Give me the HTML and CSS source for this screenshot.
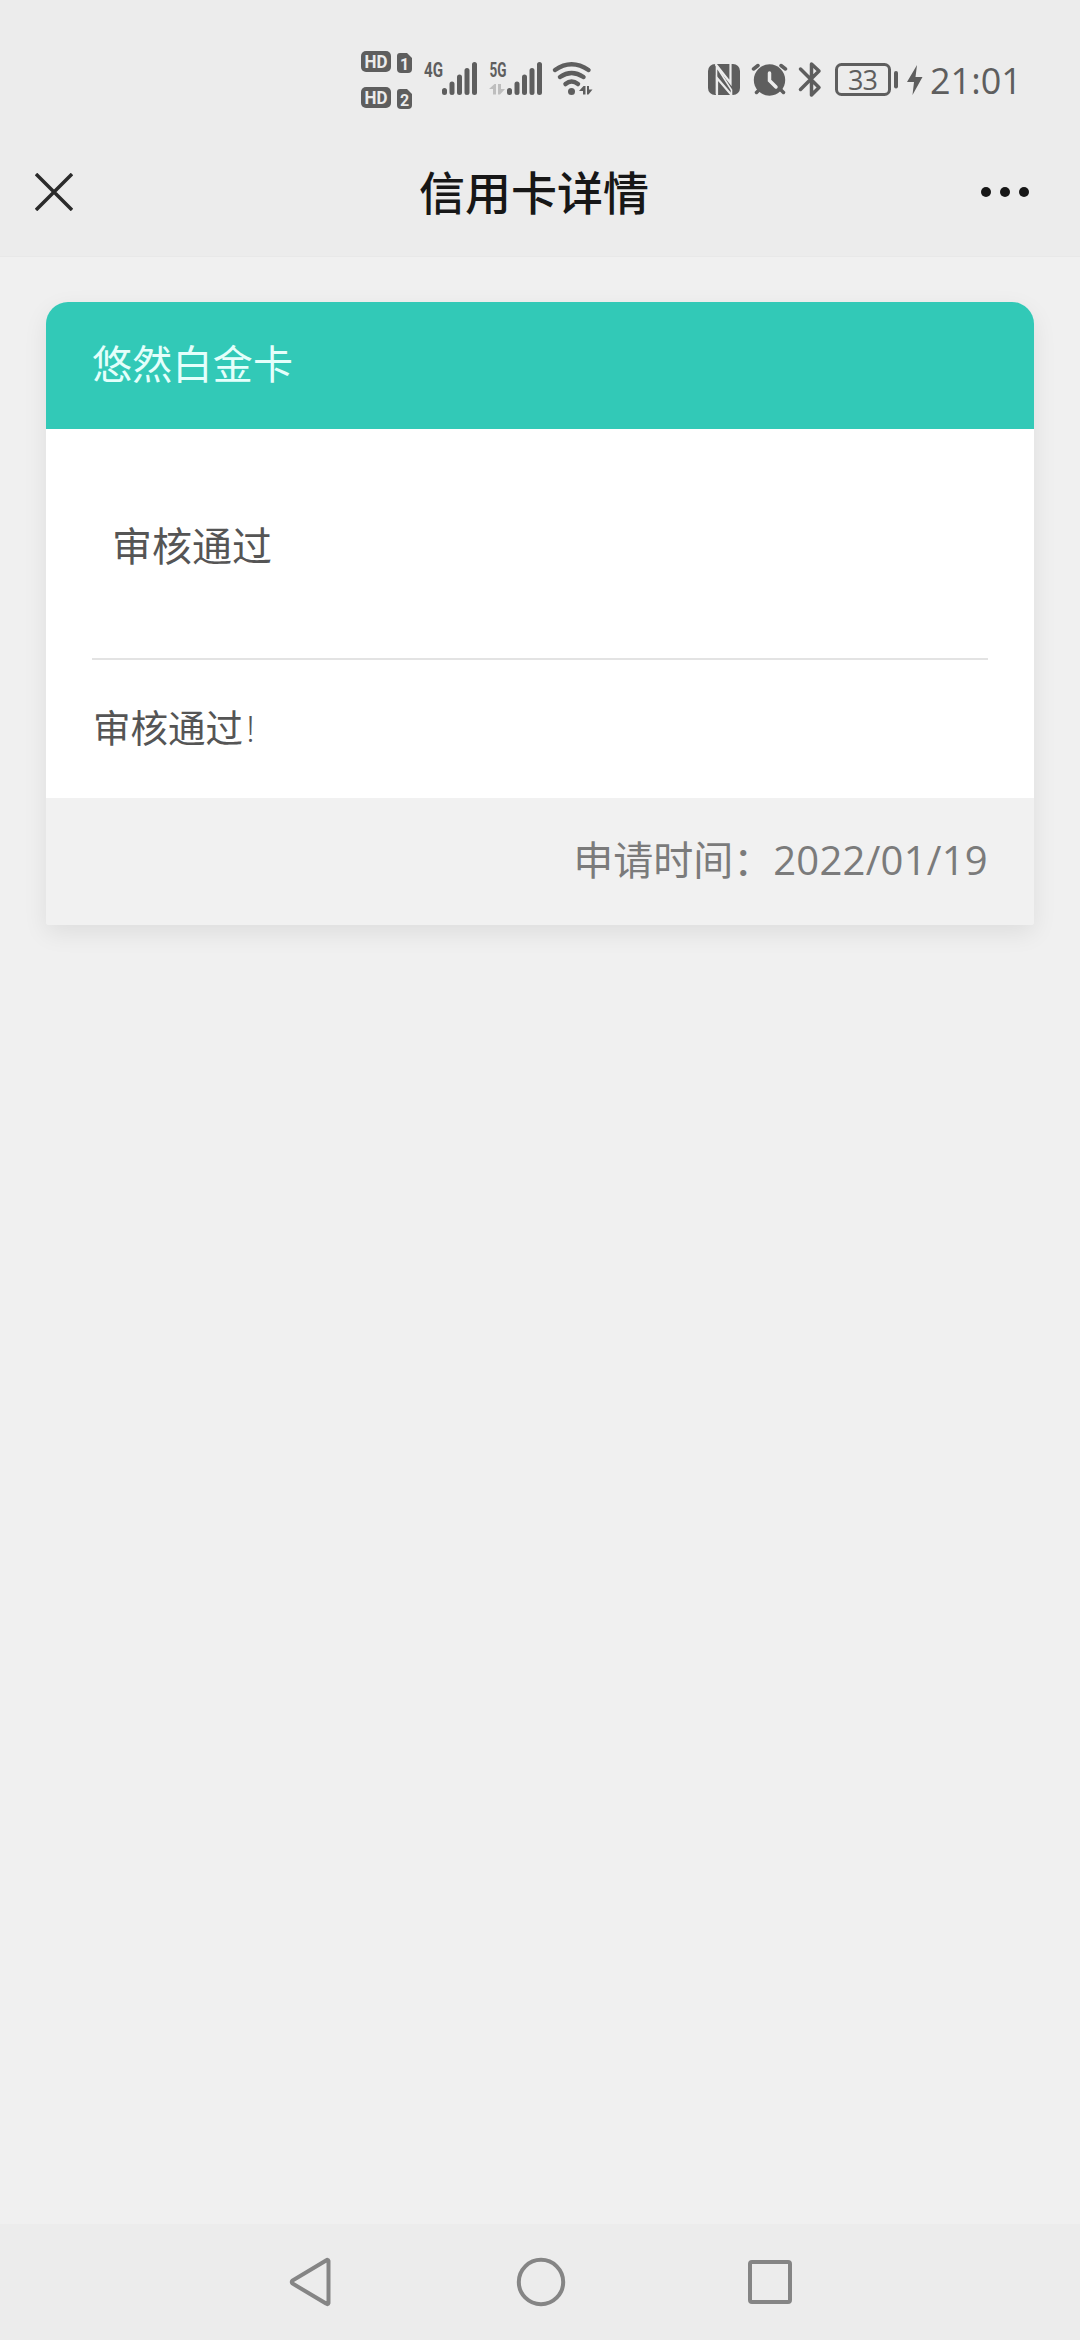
FILE: index.html
```html
<!DOCTYPE html>
<html lang="zh-CN">
<head>
<meta charset="utf-8">
<title>信用卡详情</title>
<link rel="stylesheet" href="styles.css">
</head>
<body>
<div class="screen">
  <header class="top">
    <div class="status">
      <svg class="status-left" viewBox="350 40 250 80" width="250" height="80">
        <g fill="#5e5e5e">
          <rect x="361" y="51" width="30" height="21" rx="5"/>
          <path d="M400 53H407L412 58V69Q412 73 408 73H401Q397 73 397 69V56Q397 53 400 53Z"/>
          <rect x="361" y="87" width="30" height="21" rx="5"/>
          <path d="M400 89H407L412 94V105Q412 109 408 109H401Q397 109 397 105V92Q397 89 400 89Z"/>
        </g>
        <g class="badge-text">
          <text x="364.5" y="68" textLength="23" lengthAdjust="spacingAndGlyphs">HD</text>
          <text x="364.5" y="104" textLength="23" lengthAdjust="spacingAndGlyphs">HD</text>
          <text class="sim" x="400" y="69.5">1</text>
          <text class="sim" x="400" y="105.5">2</text>
        </g>
        <g class="net-text">
          <text x="424" y="77" textLength="19" lengthAdjust="spacingAndGlyphs">4G</text>
          <text x="489.5" y="77" textLength="17" lengthAdjust="spacingAndGlyphs">5G</text>
        </g>
        <g stroke="#5e5e5e" stroke-width="5" stroke-linecap="round">
          <path d="M444.5 90.5V92.5M452 84V92.5M459.5 77V92.5M467 70.5V92.5M474.5 64.5V92.5"/>
          <path d="M509.5 90.5V92.5M517 84V92.5M524.5 77V92.5M532 70.5V92.5M539.5 64.5V92.5"/>
        </g>
        <path fill="#bebebe" d="M489 89L494.5 84H496V94.5H493V89ZM498 84H501V89H505L500 94.5H498Z"/>
        <g fill="none" stroke="#5e5e5e" stroke-width="4.5" stroke-linecap="round">
          <path d="M555 70Q571.5 58.5 588.5 70"/>
          <path d="M560 77Q571.5 69 583.5 77"/>
          <path d="M565.5 84Q571.5 79 578 84"/>
        </g>
        <circle cx="571.5" cy="91.5" r="3.5" fill="#5e5e5e"/>
        <path fill="#5e5e5e" d="M579 91L583.5 86H585.5V94.5H583V91ZM587 86H589V89.5H592.5L588.5 94.5H587Z"/>
      </svg>
      <svg class="status-right" viewBox="700 40 230 80" width="230" height="80">
        <rect x="708" y="64" width="32" height="31" rx="7" fill="#5e5e5e"/>
        <path d="M717 95V78L731.500 95M715.500 64L730.500 83V64" fill="none" stroke="#ececec" stroke-width="2.200"/>
        <path d="M716.500 94V66.500L731.500 90V95" fill="none" stroke="#ececec" stroke-width="1.600"/>
        <path stroke="#5e5e5e" stroke-linecap="round" stroke-width="3.500" d="M753.5 69L758 65.5M785.5 69L781 65.5M756.5 92.5L761 88M783.5 92.5L779 88"/>
        <circle cx="769.500" cy="80" r="15.700" fill="#5e5e5e"/>
        <path d="M769.5 73V80.5L776 87" fill="none" stroke="#ececec" stroke-width="3.500" stroke-linecap="round"/>
        <path d="M800.5 69L819 87.500L811.5 95V64L819 71L800.5 89.5" fill="none" stroke="#5e5e5e" stroke-width="3.500" stroke-linecap="round" stroke-linejoin="round"/>
        <rect x="836.500" y="64.500" width="53" height="30" rx="5" fill="none" stroke="#5e5e5e" stroke-width="3"/>
        <text class="battery-text" x="862.500" y="90" text-anchor="middle">33</text>
        <path d="M896 73V86.5" stroke="#5e5e5e" stroke-width="4" stroke-linecap="round"/>
        <path d="M917 65L907 82H914L912.5 95L922.5 77H915.5Z" fill="#5e5e5e"/>
      </svg>
      <span class="clock">21:01</span>
    </div>
    <div class="titlebar">
      <svg viewBox="0 0 38 38" width="38" height="38"><path d="M1 1L37 37M37 1L1 37" stroke="#2b2b2b" stroke-width="3.500"/></svg>
      <h1 class="title">信用卡详情</h1>
      <svg viewBox="0 0 50 12" width="50" height="12" fill="#171717"><circle cx="6" cy="6" r="5"/><circle cx="25" cy="6" r="5"/><circle cx="44" cy="6" r="5"/></svg>
    </div>
  </header>
  <main class="content">
    <section class="card">
      <div class="card-head">悠然白金卡</div>
      <div class="card-body">
        <div class="result">审核通过</div>
        <div class="message">审核通过<span class="mark">!</span></div>
      </div>
      <div class="card-foot">申请时间：<span class="date">2022/01/19</span></div>
    </section>
  </main>
  <nav class="navbar">
    <svg viewBox="0 0 50 50" width="50" height="50"><path d="M41.5 4V46Q41 48 39 46.500L5.500 26.500Q4 25 5.500 23.500L39 3.500Q41 2 41.5 4Z"/></svg>
    <svg viewBox="0 0 50 50" width="50" height="50"><circle cx="25" cy="25" r="22.200"/></svg>
    <svg viewBox="0 0 50 50" width="50" height="50"><rect x="5" y="5" width="40" height="40" rx="2"/></svg>
  </nav>
</div>
</body>
</html>
```
FILE: styles.css
```css
* { box-sizing: border-box; }
body {
  margin: 0;
  background: #f0f0f0;
  font-family: "Open Sans", "Noto Sans CJK SC", sans-serif;
}
svg { display: block; flex: none; }
.screen {
  width: 1080px;
  height: 2340px;
  display: flex;
  flex-direction: column;
  overflow: hidden;
}
.top {
  height: 257px;
  background: #ececec;
  border-bottom: 1px solid #e8e8e8;
}
.status {
  height: 120px;
  padding: 40px 0 0 350px;
  display: flex;
}
.status-left { margin-right: 100px; }
.clock {
  color: #5e5e5e;
  font-size: 36px;
  line-height: 81px;
  white-space: nowrap;
}
.badge-text {
  fill: #ececec;
  font: bold 18px Roboto, sans-serif;
}
.badge-text .sim { font-size: 16px; }
.net-text {
  fill: #5e5e5e;
  font: bold 20px Roboto, sans-serif;
}
.battery-text {
  fill: #5e5e5e;
  font: 27px "Open Sans", sans-serif;
  letter-spacing: -1px;
}
.titlebar {
  height: 144px;
  padding: 0 50px 0 35px;
  display: flex;
  align-items: center;
}
.title {
  margin: 0 auto 0 346px;
  font-size: 46px;
  line-height: 60px;
  font-weight: 500;
  color: #171717;
}
.content {
  flex: 1;
  padding: 45px 46px 0;
}
.card {
  border-radius: 22px 22px 3px 3px;
  box-shadow: 0 8px 24px rgba(0, 0, 0, 0.08);
  overflow: hidden;
}
.card-head {
  height: 127px;
  padding-left: 46px;
  background: #32c9b7;
  color: #e4fffb;
  font-size: 40px;
  letter-spacing: 0.25px;
  line-height: 123px;
}
.card-body {
  height: 369px;
  padding: 0 46px;
  background: #fff;
  color: #555;
}
.result {
  height: 231px;
  padding-left: 20px;
  border-bottom: 2px solid #e3e3e3;
  font-size: 40px;
  line-height: 234px;
}
.message {
  padding-left: 1px;
  font-size: 37.5px;
  line-height: 136px;
}
.mark {
  margin-left: 3px;
  font-weight: 300;
}
.card-foot {
  height: 127px;
  padding-right: 46px;
  background: #f1f1f1;
  color: #7b7b7b;
  font-size: 40px;
  line-height: 124px;
  text-align: right;
}
.date { letter-spacing: 0.25px; }
.navbar {
  height: 116px;
  padding-left: 1px;
  background: #ececec;
  display: flex;
  justify-content: center;
  align-items: center;
  gap: 179px;
}
.navbar svg {
  fill: none;
  stroke: #858585;
  stroke-width: 4;
}
```
